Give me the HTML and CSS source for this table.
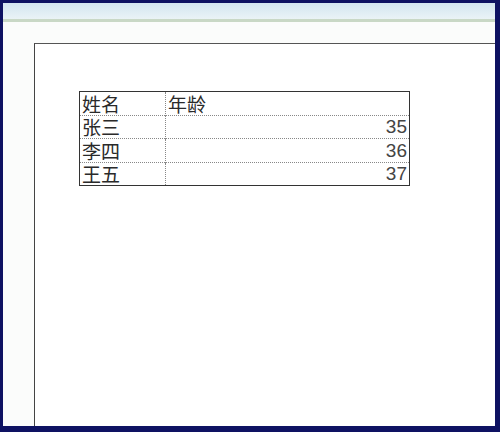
FILE: index.html
```html
<!DOCTYPE html>
<html>
<head>
<meta charset="utf-8">
<link rel="stylesheet" href="styles.css">
</head>
<body>
<div class="frame">
  <div class="ribbon"></div>
  <div class="rule"></div>
  <div class="workspace">
    <div class="page">
      <table class="sheet">
        <tr><td class="name">姓名</td><td class="age head">年龄</td></tr>
        <tr><td class="name">张三</td><td class="age">35</td></tr>
        <tr><td class="name">李四</td><td class="age">36</td></tr>
        <tr><td class="name">王五</td><td class="age">37</td></tr>
      </table>
    </div>
  </div>
</div>
</body>
</html>
```
FILE: styles.css
```css
html, body {
  margin: 0;
  padding: 0;
  background: #0e1262;
}
.frame {
  box-sizing: border-box;
  width: 500px;
  height: 432px;
  border-style: solid;
  border-color: #0e1262;
  border-width: 3px 5px 6px 3px;
  background: #fbfcfb;
  overflow: hidden;
  display: flex;
  flex-direction: column;
}
.ribbon {
  height: 16px;
  background: linear-gradient(#d3e5f0, #eaf3f6);
  flex: none;
}
.rule {
  height: 3px;
  background: #c9d8c6;
  flex: none;
}
.workspace {
  flex: 1;
  padding: 21px 0 0 31px;
  background: #fbfcfb;
}
.page {
  width: 600px;
  height: 500px;
  background: #ffffff;
  border-top: 1px solid #555;
  border-left: 1px solid #444;
  padding: 47px 0 0 44px;
  box-sizing: border-box;
}
.sheet {
  border-collapse: collapse;
  border: 1px solid #333;
  font-family: "Noto Sans CJK SC", "Liberation Sans", sans-serif;
  color: #2a2a2a;
}
.sheet td {
  height: 23px;
  padding: 0 2px;
  line-height: 22px;
  border-top: 1px dotted #888;
  border-left: 1px dotted #888;
  vertical-align: bottom;
  box-sizing: border-box;
}
.sheet tr:nth-child(odd) td {
  height: 24px;
}
.sheet tr:first-child td {
  border-top: none;
}
.name {
  width: 86px;
  font-size: 19px;
}
.age {
  width: 244px;
  text-align: right;
  font-family: "Liberation Sans", "Noto Sans CJK SC", sans-serif;
  font-size: 19px;
  color: #444;
}
.age.head {
  text-align: left;
  font-family: "Noto Sans CJK SC", sans-serif;
  font-size: 19px;
  color: #2a2a2a;
}
```
